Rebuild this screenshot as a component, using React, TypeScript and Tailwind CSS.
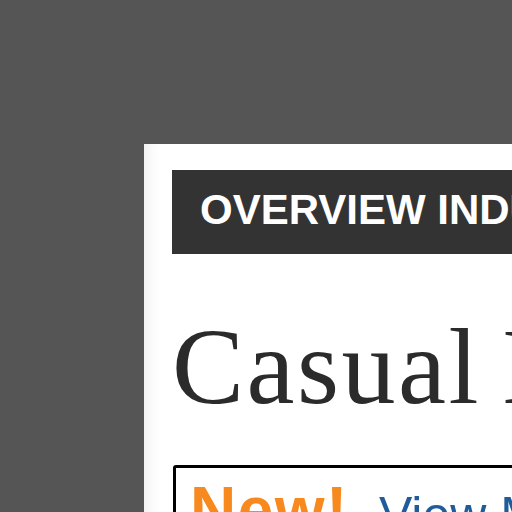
export default function App() {
  return (
    <div className="w-[512px] h-[512px] overflow-hidden bg-[#555555]">
      <div className="ml-[144px] mt-[144px] w-[600px] h-[600px] bg-white pl-[28px] pt-[26px] shadow-[inset_14px_0_14px_-10px_rgba(0,0,0,0.07)]">
        <div className="h-[84px] bg-[#333333] pl-[28px] pt-[19px]">
          <div className="text-[42px] leading-[42px] font-bold text-white whitespace-nowrap" style={{ fontFamily: '"Liberation Sans", Arial, sans-serif' }}>
            OVERVIEW INDUSTRY
          </div>
        </div>
        <h1 className="mt-[59px] text-[108px] leading-[108px] tracking-[2.5px] [word-spacing:-8px] text-[#2b2b2b] whitespace-nowrap" style={{ fontFamily: '"Liberation Serif", "Times New Roman", serif' }}>
          Casual Dining
        </h1>
        <div className="mt-[44px] ml-[1px] border-[3px] border-black rounded-tl-[3px] pl-[14px] pt-[10px] h-[120px] whitespace-nowrap" style={{ fontFamily: '"Liberation Sans", Arial, sans-serif' }}>
          <span className="text-[64px] leading-[64px] font-bold tracking-[1.5px] text-[#f7891f] mr-[30px]">New!</span>
          <span className="text-[50px] leading-[64px] text-[#1f5d9a]">View More</span>
        </div>
      </div>
    </div>
  );
}
